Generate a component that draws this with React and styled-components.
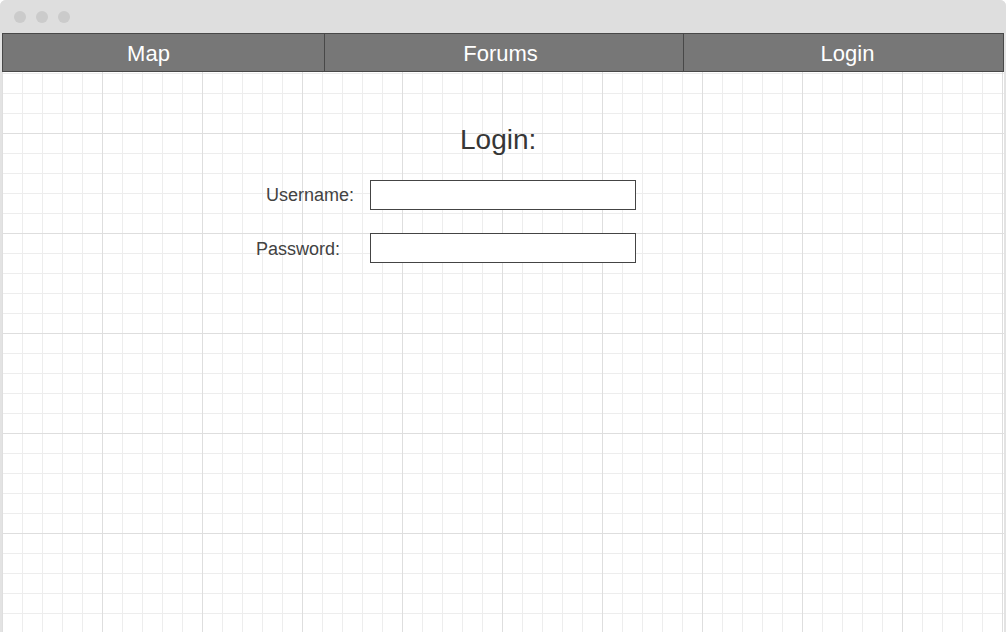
import React from "react";
import styled, { createGlobalStyle } from "styled-components";

const Global = createGlobalStyle`
  html, body { margin: 0; padding: 0; background: #ffffff; }
  body { font-family: "Liberation Sans", Arial, sans-serif; overflow: hidden; }
  * { box-sizing: border-box; }
`;

const Window = styled.div`
  width: 1006px;
  height: 632px;
  background: #e3e3e3;
  border-radius: 6px 6px 0 0;
  padding: 0 2px;
  display: flex;
  flex-direction: column;
`;

const TitleBar = styled.div`
  height: 33px;
  background: #dedede;
  margin: 0 -2px;
  border-radius: 6px 6px 0 0;
  display: flex;
  align-items: center;
  gap: 10px;
  padding-left: 14px;
  flex-shrink: 0;
`;

const Dot = styled.span`
  width: 12px;
  height: 12px;
  border-radius: 50%;
  background: #cbcbcb;
`;

const Canvas = styled.div`
  flex: 1;
  background-color: #ffffff;
  background-image:
    linear-gradient(to right, #dedede 1px, transparent 1px),
    linear-gradient(to bottom, #dedede 1px, transparent 1px),
    linear-gradient(to right, #ededed 1px, transparent 1px),
    linear-gradient(to bottom, #ededed 1px, transparent 1px);
  background-size: 100px 100px, 100px 100px, 20px 20px, 20px 20px;
  display: flex;
  flex-direction: column;
`;

const Nav = styled.nav`
  height: 39px;
  display: flex;
  background: #777777;
  border: 1px solid #484848;
`;

const NavItem = styled.div`
  width: ${(p) => p.$width}px;
  flex-shrink: 0;
  display: flex;
  align-items: center;
  justify-content: center;
  color: #ffffff;
  font-size: 22px;
  padding-top: 2px;
  padding-left: ${(p) => p.$pl || 0}px;
  padding-right: ${(p) => p.$pr || 0}px;
  border-left: ${(p) => (p.$divider ? "1px solid #484848" : "none")};
`;

const Form = styled.div`
  margin-left: 254px;
  margin-top: 52px;
  display: flex;
  flex-direction: column;
  width: 380px;
`;

const Heading = styled.h1`
  margin: 0 0 24px;
  padding-left: 204px;
  font-size: 28px;
  line-height: 32px;
  font-weight: normal;
  color: #363636;
`;

const Row = styled.div`
  display: grid;
  grid-template-columns: 100px 266px;
  column-gap: 14px;
  align-items: center;
  margin-bottom: 23px;
`;

const Label = styled.label`
  text-align: right;
  font-size: 18px;
  color: #424242;
  padding-right: ${(p) => p.$inset || 0}px;
  padding-top: ${(p) => p.$drop || 0}px;
  white-space: nowrap;
`;

const Input = styled.input`
  height: 30px;
  width: 266px;
  border: 1px solid #444444;
  background: #ffffff;
  margin: 0;
  padding: 0 6px;
  font-family: inherit;
  font-size: 16px;
  outline: none;
`;

export default function App() {
  return (
    <>
      <Global />
      <Window>
        <TitleBar>
          <Dot />
          <Dot />
          <Dot />
        </TitleBar>
        <Canvas>
          <Nav>
            <NavItem $width={321} $pr={30}>Map</NavItem>
            <NavItem $width={359} $pr={7} $divider>Forums</NavItem>
            <NavItem $width={320} $pl={8} $divider>Login</NavItem>
          </Nav>
          <Form>
            <Heading>Login:</Heading>
            <Row>
              <Label $inset={2}>Username:</Label>
              <Input type="text" />
            </Row>
            <Row>
              <Label $inset={16} $drop={2}>Password:</Label>
              <Input type="password" />
            </Row>
          </Form>
        </Canvas>
      </Window>
    </>
  );
}
